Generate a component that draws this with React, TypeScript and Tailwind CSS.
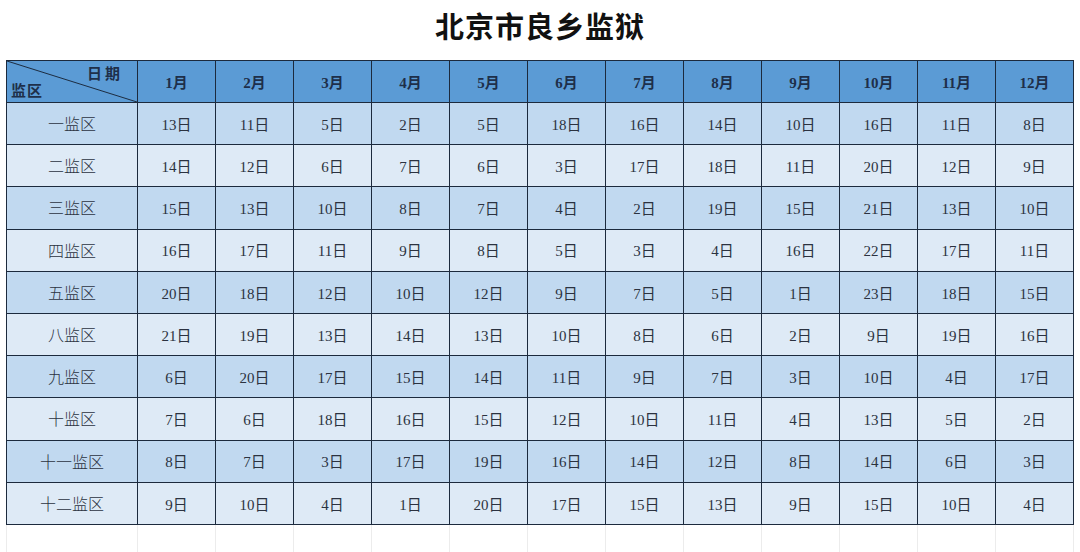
const months = ["1月", "2月", "3月", "4月", "5月", "6月", "7月", "8月", "9月", "10月", "11月", "12月"];

const rows: [string, number[]][] = [
  ["一监区", [13, 11, 5, 2, 5, 18, 16, 14, 10, 16, 11, 8]],
  ["二监区", [14, 12, 6, 7, 6, 3, 17, 18, 11, 20, 12, 9]],
  ["三监区", [15, 13, 10, 8, 7, 4, 2, 19, 15, 21, 13, 10]],
  ["四监区", [16, 17, 11, 9, 8, 5, 3, 4, 16, 22, 17, 11]],
  ["五监区", [20, 18, 12, 10, 12, 9, 7, 5, 1, 23, 18, 15]],
  ["八监区", [21, 19, 13, 14, 13, 10, 8, 6, 2, 9, 19, 16]],
  ["九监区", [6, 20, 17, 15, 14, 11, 9, 7, 3, 10, 4, 17]],
  ["十监区", [7, 6, 18, 16, 15, 12, 10, 11, 4, 13, 5, 2]],
  ["十一监区", [8, 7, 3, 17, 19, 16, 14, 12, 8, 14, 6, 3]],
  ["十二监区", [9, 10, 4, 1, 20, 17, 15, 13, 9, 15, 10, 4]],
];

const font = { fontFamily: '"Liberation Serif", "Noto Sans CJK SC", serif' };

export default function App() {
  return (
    <div className="w-[1080px] h-[552px] overflow-hidden bg-white" style={font}>
      <div className="h-[60px] flex justify-center pt-[6px]">
        <h1
          className="text-[29px] leading-[38px] font-bold text-[#111] tracking-[1px]"
          style={{ fontFamily: '"Noto Sans CJK SC", sans-serif' }}
        >
          北京市良乡监狱
        </h1>
      </div>
      <table className="ml-[6px] border-collapse table-fixed text-[15px] text-[#2b3240]">
        <colgroup>
          <col className="w-[131px]" />
          {months.map((m) => (
            <col key={m} className="w-[78px]" />
          ))}
        </colgroup>
        <thead>
          <tr className="h-[42px] bg-[#5b9bd5]">
            <th className="relative border border-[#1c2a3d] p-0 font-normal">
              <svg className="absolute inset-0 w-full h-full" viewBox="0 0 131 42" preserveAspectRatio="none">
                <line x1="0" y1="0" x2="131" y2="42" stroke="#1c2a3d" strokeWidth="1" />
              </svg>
              <span className="absolute right-[14px] top-[2px] text-[15px] font-bold tracking-[3px] text-[#1e2f4a]">日期</span>
              <span className="absolute left-[4px] bottom-[0px] text-[15px] font-bold tracking-[1px] text-[#1e2f4a]">监区</span>
            </th>
            {months.map((m) => (
              <th key={m} className="border border-[#1c2a3d] pt-[3px] text-center font-bold text-[15px] text-[#1e2f4a]">
                {m}
              </th>
            ))}
          </tr>
        </thead>
        <tbody>
          {rows.map(([name, days], i) => (
            <tr key={name} className={`h-[42.2px] ${i % 2 === 0 ? "bg-[#c1d9f0]" : "bg-[#deeaf6]"}`}>
              <td className="border border-[#1c2a3d] pt-[3px] text-center text-[16px] font-light">{name}</td>
              {days.map((d, j) => (
                <td key={j} className="border border-[#1c2a3d] pt-[3px] text-center">
                  {d}日
                </td>
              ))}
            </tr>
          ))}
          <tr className="h-[40px] bg-white">
            <td className="border-x border-[#ececec]" />
            {months.map((m) => (
              <td key={m} className="border-x border-[#ececec]" />
            ))}
          </tr>
        </tbody>
      </table>
    </div>
  );
}
